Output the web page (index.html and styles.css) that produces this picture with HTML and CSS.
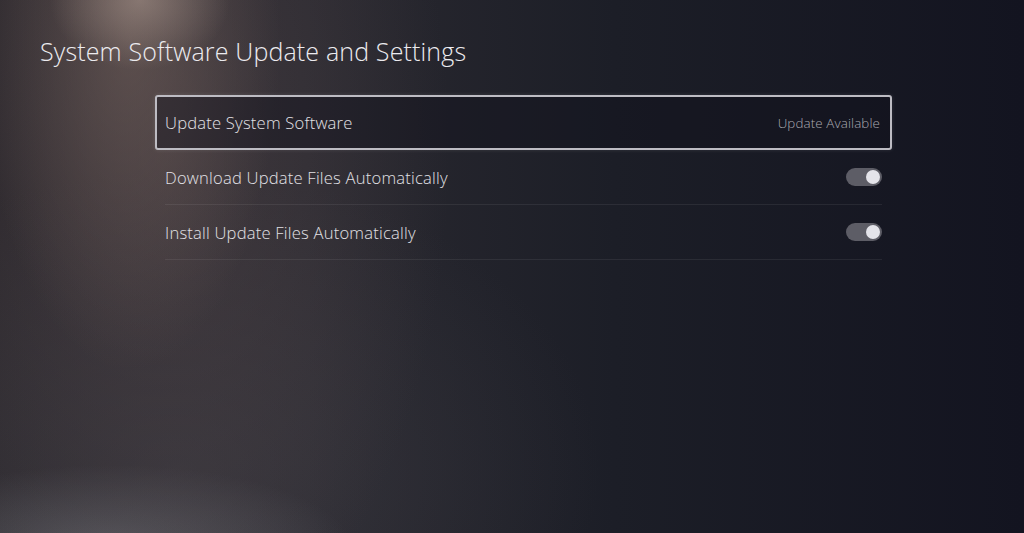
FILE: index.html
```html
<!DOCTYPE html>
<html>
<head>
<meta charset="utf-8">
<link rel="stylesheet" href="styles.css">
</head>
<body>
<div class="screen">
  <h1 class="title">System Software Update and Settings</h1>
  <div class="list">
    <div class="row focused">
      <span class="label">Update System Software</span>
      <span class="value">Update Available</span>
    </div>
    <div class="row">
      <span class="label">Download Update Files Automatically</span>
      <span class="toggle"><span class="knob"></span></span>
    </div>
    <div class="row">
      <span class="label">Install Update Files Automatically</span>
      <span class="toggle"><span class="knob"></span></span>
    </div>
  </div>
</div>
</body>
</html>
```
FILE: styles.css
```css
html, body {
  margin: 0;
  padding: 0;
  width: 1024px;
  height: 533px;
  overflow: hidden;
}
body {
  font-family: "Open Sans", "Noto Sans", sans-serif;
  color: #e6e6ea;
  background: #141520;
}
.screen {
  width: 1024px;
  height: 533px;
  box-sizing: border-box;
  padding: 33px 0 0 0;
  background:
    radial-gradient(ellipse 90px 70px at 140px 0px, rgba(175,155,145,0.55), rgba(175,155,145,0) 100%),
    radial-gradient(ellipse 150px 330px at 130px 40px, rgba(125,105,98,0.5), rgba(125,105,98,0) 100%),
    radial-gradient(ellipse 280px 520px at 170px 150px, rgba(85,72,75,0.5), rgba(85,72,75,0) 100%),
    radial-gradient(ellipse 240px 80px at 110px 545px, rgba(115,116,122,0.55), rgba(115,116,122,0) 100%),
    radial-gradient(ellipse 420px 300px at 180px 470px, rgba(70,68,75,0.45), rgba(70,68,75,0) 100%),
    linear-gradient(90deg, #29262b 0%, #2a2930 30%, #1c1e27 60%, #131420 100%);
}
.title {
  margin: 0 0 0 40px;
  font-size: 25px;
  font-weight: 300;
  line-height: 36px;
  color: #ecebef;
  letter-spacing: 0.15px;
}
.list {
  margin: 26px 0 0 155px;
  width: 737px;
  display: flex;
  flex-direction: column;
}
.row {
  height: 55px;
  box-sizing: border-box;
  margin: 0 10px;
  display: flex;
  align-items: center;
  justify-content: space-between;
  border-bottom: 1px solid rgba(255,255,255,0.07);
}
.row.focused {
  margin: 0;
  padding: 0 10px 0 8px;
  border: 2px solid #bdbcc3;
  border-radius: 3px;
  background: rgba(18,18,28,0.45);
  box-shadow: 0 0 4px rgba(255,255,255,0.12);
}
.label {
  font-size: 16.6px;
  font-weight: 300;
  letter-spacing: 0.2px;
  color: #e2e1e6;
}
.value {
  font-size: 13.4px;
  font-weight: 300;
  letter-spacing: 0.1px;
  color: #a9a9b0;
}
.toggle {
  width: 36px;
  height: 18px;
  border-radius: 9px;
  background: #5d5d66;
  display: flex;
  align-items: center;
  justify-content: flex-end;
  padding: 0 2px;
  box-sizing: border-box;
}
.knob {
  width: 14px;
  height: 14px;
  border-radius: 50%;
  background: #e4e4ea;
}
```
